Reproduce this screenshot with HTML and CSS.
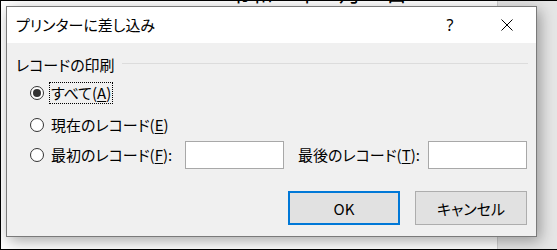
FILE: index.html
```html
<!DOCTYPE html>
<html lang="ja">
<head>
<meta charset="utf-8">
<link rel="stylesheet" href="styles.css">
</head>
<body>
<div class="screen">
  <div class="page">
    <div class="doc-line">令和２年２月28日</div>
    <div class="doc-mark">↵</div>
  </div>
  <div class="side"></div>

  <div class="dialog">
    <div class="titlebar">
      <div class="title">プリンターに差し込み</div>
      <div class="help">?</div>
      <div class="close">
        <svg width="12" height="12" viewBox="0 0 12 12"><path d="M0.5 0.5 L11.5 11.5 M11.5 0.5 L0.5 11.5" stroke="#000" stroke-width="1" fill="none"/></svg>
      </div>
    </div>
    <div class="body">
      <div class="group-head">
        <span class="group-label">レコードの印刷</span>
        <span class="group-line"></span>
      </div>
      <div class="options">
        <div class="opt opt-first">
          <span class="radio checked"></span>
          <span class="lbl focus">すべて(<u>A</u>)</span>
        </div>
        <div class="opt opt-second">
          <span class="radio"></span>
          <span class="lbl">現在のレコード(<u>E</u>)</span>
        </div>
        <div class="opt opt-range">
          <span class="radio"></span>
          <span class="lbl lbl-from">最初のレコード(<u>F</u>):</span>
          <span class="field"></span>
          <span class="lbl-to">最後のレコード(<u>T</u>):</span>
          <span class="field"></span>
        </div>
      </div>
      <div class="buttons">
        <div class="btn btn-default">OK</div>
        <div class="btn">キャンセル</div>
      </div>
    </div>
  </div>
</div>
</body>
</html>
```
FILE: styles.css
```css
* { box-sizing: border-box; }
html, body { margin: 0; padding: 0; background: #fff; }
body {
  font-family: "Noto Sans CJK JP", "Noto Sans", sans-serif;
  font-feature-settings: "palt";
  color: #000;
}
.screen {
  position: relative;
  width: 557px;
  height: 250px;
  overflow: hidden;
  border-top: 1px solid #000;
  border-left: 1px solid #000;
  border-bottom: 1px solid #000;
  display: flex;
}
.page {
  width: 497px;
  height: 100%;
  background: #fff;
  border-right: 1px solid #d0d0d0;
  overflow: hidden;
  display: flex;
  flex-direction: column;
}
.doc-line {
  margin-top: -22px;
  margin-left: 228px;
  font-size: 22px;
  line-height: 24px;
  color: #000;
  white-space: nowrap;
  font-feature-settings: normal;
}
.doc-mark {
  margin-top: 210px;
  margin-left: 376px;
  font-size: 12px;
  line-height: 12px;
  color: #8a8a8a;
}
.side {
  flex: 1;
  background: #e6e6e6;
}
.dialog {
  position: absolute;
  left: 5px;
  top: 5px;
  width: 531px;
  height: 231px;
  border: 1px solid #7a7a7a;
  background: #f0f0f0;
  box-shadow: 3px 4px 14px rgba(0, 0, 0, 0.35);
  display: flex;
  flex-direction: column;
}
.titlebar {
  height: 36px;
  background: #fff;
  display: flex;
  align-items: center;
  padding-left: 9px;
}
.title {
  flex: 1;
  font-size: 15px;
  line-height: 20px;
  margin-top: -1px;
}
.help {
  flex: none;
  font-size: 16px;
  line-height: 20px;
  width: 12px;
  text-align: center;
  margin-right: 45px;
  font-family: "Noto Sans", sans-serif;
}
.close {
  flex: none;
  width: 12px;
  height: 12px;
  margin-right: 23px;
  display: flex;
}
.body {
  flex: 1;
  padding: 12px 8px 10px 9px;
  display: flex;
  flex-direction: column;
}
.group-head {
  height: 20px;
  display: flex;
  align-items: center;
}
.group-label {
  font-size: 15px;
  line-height: 20px;
}
.group-line {
  flex: 1;
  height: 1px;
  background: #dcdcdc;
  margin-left: 7px;
  align-self: flex-start;
  margin-top: 8px;
}
.options {
  display: flex;
  flex-direction: column;
  padding-left: 14px;
  margin-top: 7px;
}
.opt {
  display: flex;
  align-items: center;
  font-size: 15px;
  white-space: nowrap;
}
.opt-first { height: 22px; }
.opt-second { height: 22px; margin-top: 10px; }
.opt-range { height: 28px; margin-top: 5px; }
.radio {
  width: 14px;
  height: 14px;
  border: 1px solid #333;
  border-radius: 50%;
  background: #fff;
  display: flex;
  align-items: center;
  justify-content: center;
  flex: none;
}
.radio.checked::after {
  content: "";
  width: 8px;
  height: 8px;
  border-radius: 50%;
  background: #333;
}
.lbl {
  margin-left: 5px;
  padding: 0 1px;
  border: 1px dotted transparent;
  height: 22px;
  line-height: 20px;
}
.lbl.focus { border-color: #000; }
.lbl u, .lbl-to u { text-underline-offset: 2px; }
.lbl-from { width: 136px; flex: none; }
.field {
  width: 99px;
  height: 28px;
  background: #fff;
  border: 1px solid #a8a8a8;
  flex: none;
}
.lbl-to {
  width: 144px;
  padding-left: 14px;
  flex: none;
  line-height: 20px;
}
.buttons {
  margin-top: 22px;
  display: flex;
  justify-content: flex-end;
  gap: 15px;
  padding-right: 1px;
}
.btn {
  width: 112px;
  height: 34px;
  background: #e1e1e1;
  border: 1px solid #adadad;
  display: flex;
  align-items: center;
  justify-content: center;
  font-size: 15px;
}
.btn-default { border: 2px solid #0078d7; }
```
